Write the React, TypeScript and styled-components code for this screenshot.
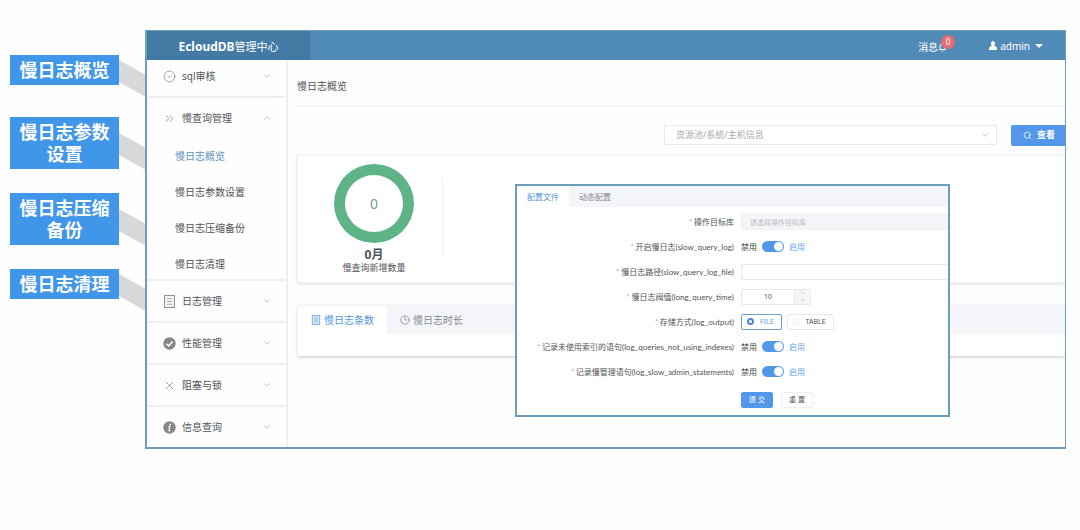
import React, { useState } from 'react';
import styled, { createGlobalStyle, css } from 'styled-components';
import {
  ChevronDown, ChevronUp, ChevronsRight, CircleCheck, Clock3, Search, X,
} from 'lucide-react';

const GlobalStyle = createGlobalStyle`
  * { box-sizing: border-box; }
  body {
    margin: 0;
    background: #fefefe;
    color: #505357;
    font-family: "Noto Sans", "Noto Sans CJK SC", sans-serif;
    font-size: 10px;
    line-height: 14px;
  }
  button, input, select { font: inherit; color: inherit; margin: 0; }
  h1, h2, p, ul { margin: 0; padding: 0; font-weight: 400; }
  ul { list-style: none; }
  a { color: inherit; text-decoration: none; }
  svg { display: block; flex: none; }
`;

const Page = styled.div`
  display: flex;
  align-items: flex-start;
  padding: 30px 14px 30px 10px;
`;

/* Callouts */
const Callouts = styled.aside`
  flex: none;
  width: 109px;
  margin-right: 26px;
  padding-top: 25px;
  display: flex;
  flex-direction: column;
  gap: 24px;
`;
const CalloutGroup = styled.div`
  display: flex;
  flex-direction: column;
  gap: 32px;
`;
const CalloutBox = styled.div`
  position: relative;
  padding: 4px 8px;
  background: #4096e8;
  color: #fff;
  font-size: 18px;
  line-height: 22px;
  font-weight: 700;
  text-align: center;
`;
const Connector = styled.svg`
  position: absolute;
  left: 100%;
  top: calc(50% - 10px);
`;

/* Application frame */
const App = styled.div`
  position: relative;
  flex: 1;
  min-width: 0;
  border: solid #6f9dbf;
  border-width: 1px 1px 2px 2px;
`;
const Header = styled.header`
  display: flex;
  align-items: center;
  height: 29px;
  background: #508bb7;
  color: #fff;
`;
const Brand = styled.h1`
  width: 163px;
  align-self: stretch;
  padding-top: 2px;
  background: #427aa4;
  font-size: 11px;
  line-height: 28px;
  text-align: center;
  b { font-size: 12px; }
`;
const Grow = styled.div`
  flex: 1;
`;
const HeaderButton = styled.button`
  position: relative;
  display: flex;
  align-items: center;
  gap: 3px;
  padding: 0;
  margin-right: 22px;
  border: 0;
  background: none;
  color: #fff;
  font-size: 10px;
`;
const Message = styled(HeaderButton)`
  gap: 0;
  margin-right: 42px;
  padding-top: 3px;
`;
const Badge = styled.span`
  position: absolute;
  right: -8px;
  top: -2px;
  width: 14px;
  height: 14px;
  border-radius: 7px;
  background: #e26d72;
  font-size: 8px;
  line-height: 14px;
  text-align: center;
`;
const Caret = styled.span`
  margin-left: 2px;
  border: solid transparent;
  border-width: 4px 4px 0;
  border-top-color: #fff;
`;
const Body = styled.div`
  display: flex;
  overflow: hidden;
`;

/* Side menu */
const Menu = styled.nav`
  flex: none;
  width: 141px;
  margin-top: -4px;
  border-right: 2px solid #eeeff0;
`;
const MenuRow = styled.button<{ $open?: boolean }>`
  display: flex;
  align-items: center;
  gap: 6px;
  width: 100%;
  height: ${p => (p.$open ? 40 : 42)}px;
  padding: 0 14px 0 16px;
  border: 0;
  border-bottom: ${p => (p.$open ? '0' : '2px solid #eeeff0')};
  background: none;
  text-align: left;
  > span { flex: 1; }
  &:last-child { height: 40px; border-bottom: 0; }
`;
const SubMenu = styled.ul`
  border-bottom: 2px solid #eeeff0;
  height: 143px;
`;
const SubLink = styled.a<{ $active?: boolean }>`
  display: block;
  padding-left: 28px;
  line-height: 36px;
  color: ${p => (p.$active ? '#5a92bf' : 'inherit')};
`;

/* Main column */
const Main = styled.main`
  flex: 1;
  min-width: 0;
  padding-left: 9px;
`;
const Title = styled.h2`
  padding-top: 6px;
  font-size: 10px;
  line-height: 40px;
  border-bottom: 1px solid #eeeff0;
`;
const Filters = styled.div`
  display: flex;
  justify-content: flex-end;
  align-items: center;
  gap: 14px;
  height: 48px;
  padding-top: 8px;
`;
const SelectWrap = styled.div`
  position: relative;
  width: 333px;
  > svg { position: absolute; right: 7px; top: 5px; pointer-events: none; }
`;
const Select = styled.select`
  appearance: none;
  width: 100%;
  height: 20px;
  padding: 0 11px;
  border: 1px solid #e6e8eb;
  border-radius: 2px;
  background: #fff;
  color: #a9abaf;
  font-size: 9px;
`;
const ViewButton = styled.button`
  display: flex;
  align-items: center;
  gap: 5px;
  width: 54px;
  height: 21px;
  padding: 0 0 0 12px;
  border: 0;
  border-radius: 2px 0 0 2px;
  background: #5397ea;
  color: #fff;
  font-size: 9px;
`;
const Card = styled.section`
  display: flex;
  background: #fff;
  border: 1px solid #f0f1f2;
  border-right: 0;
  box-shadow: 0 1px 3px rgba(0, 0, 0, 0.12);
`;
const StatCard = styled(Card)`
  height: 128px;
  padding: 8px 0;
`;
const Stat = styled.div`
  display: flex;
  flex-direction: column;
  align-items: center;
  width: 152px;
  color: #505357;
  font-size: 9px;
  line-height: 12px;
`;
const StatMonth = styled.strong`
  font-size: 12px;
  line-height: 14px;
  margin-top: 5px;
`;
const Ring = styled.div`
  display: grid;
  place-items: center;
  width: 80px;
  height: 80px;
  border: 11px solid #5fb487;
  border-radius: 50%;
  color: #74a08c;
  font-size: 14px;
`;
const Separator = styled.div`
  width: 1px;
  height: 78px;
  margin: 14px 0 0 -8px;
  background: #eeeff0;
`;
const TabCard = styled(Card)`
  flex-direction: column;
  height: 52px;
  margin-top: 22px;
  border-bottom: 1px solid #d9dbdd;
`;
const TabBar = styled.div`
  display: flex;
  background: #f4f5f8;
`;
const tabActive = css`
  background: #fff;
  color: #5397d8;
`;
const Tab = styled.button<{ $active?: boolean }>`
  display: flex;
  align-items: center;
  gap: 3px;
  height: 28px;
  padding: 0 13px;
  border: 0;
  background: none;
  color: #85888c;
  ${p => p.$active && tabActive}
`;

/* Floating configuration window */
const Dialog = styled.section`
  position: absolute;
  top: 153px;
  right: 115px;
  width: 435px;
  overflow: hidden;
  border: 2px solid #6b9dbd;
  background: #fff;
  font-size: 8px;
  line-height: 12px;
`;
const DialogTab = styled(Tab)`
  height: 21px;
  padding: 0 10px;
  font-size: 8px;
`;
const Form = styled.form`
  padding: 2px 0 7px;
`;
const Row = styled.div`
  display: grid;
  grid-template-columns: 217px 1fr;
  column-gap: 7px;
  align-items: center;
  height: 25px;
`;
const Label = styled.label`
  font-family: Lato, "Noto Sans CJK SC", sans-serif;
  text-align: right;
  white-space: nowrap;
  &::before { content: "* "; color: #c99a9a; font-size: 7px; }
`;
const Field = styled.div`
  display: flex;
  align-items: center;
  gap: 5px;
`;
const TextBox = styled.input`
  width: 100%;
  height: 16px;
  padding: 0 8px;
  border: 1px solid #e6e8eb;
  border-right: 0;
  border-radius: 2px 0 0 2px;
  background: #fff;
  &:disabled { background: #f4f5f8; border-color: #eff0f3; }
  &::placeholder { color: #b9bbc0; opacity: 1; font-size: 7px; }
`;
const Stepper = styled.div`
  display: flex;
  width: 70px;
  height: 16px;
  border: 1px solid #e6e8eb;
  border-radius: 2px;
`;
const NumberBox = styled.input`
  flex: 1;
  min-width: 0;
  padding: 0;
  border: 0;
  background: none;
  text-align: center;
  font-size: 7px;
`;
const StepButtons = styled.div`
  display: flex;
  flex-direction: column;
  width: 16px;
  border-left: 1px solid #e6e8eb;
  background: #f4f5f8;
`;
const StepButton = styled.button`
  display: grid;
  place-items: center;
  height: 7px;
  padding: 0;
  border: 0;
  background: none;
  color: #a9abaf;
`;
const Switch = styled.input`
  appearance: none;
  position: relative;
  width: 22px;
  height: 11px;
  border-radius: 6px;
  background: #c9ccd2;
  &::after {
    content: "";
    position: absolute;
    top: 1px;
    left: 1px;
    width: 9px;
    height: 9px;
    border-radius: 50%;
    background: #fff;
  }
  &:checked { background: #5397ea; }
  &:checked::after { left: 12px; }
`;
const SwitchText = styled.span<{ $on?: boolean }>`
  color: ${p => (p.$on ? '#5f9fe6' : '#3c3f43')};
`;
const RadioBox = styled.label<{ $on: boolean }>`
  display: flex;
  align-items: center;
  gap: 6px;
  height: 16px;
  padding: 0 7px 0 5px;
  border: 1px solid ${p => (p.$on ? '#6b9fd0' : '#e6e8eb')};
  border-radius: 2px;
  color: ${p => (p.$on ? '#5f9fe6' : 'inherit')};
  font-size: 7px;
`;
const Radio = styled.input`
  appearance: none;
  width: 7px;
  height: 7px;
  border: 1px solid #eceef0;
  border-radius: 50%;
  &:checked { border: 2px solid #4a86cc; }
`;
const Actions = styled.div`
  display: flex;
  gap: 8px;
  margin: 8px 0 0 224px;
`;
const FormButton = styled.button<{ $primary?: boolean }>`
  width: 32px;
  height: 16px;
  padding: 0;
  border: 1px solid ${p => (p.$primary ? '#5397ea' : '#eceef0')};
  border-radius: 2px;
  background: ${p => (p.$primary ? '#5397ea' : '#fff')};
  color: ${p => (p.$primary ? '#fff' : 'inherit')};
  font-size: 7px;
  line-height: 12px;
`;

const ListIcon = ({ color = '#8d9094', fill = 'none', size = 12 }) => (
  <svg width={size} height={size} viewBox="0 0 12 12" fill="none" stroke={color}>
    <rect x="1.5" y="0.5" width="9" height="11" fill={fill} />
    <path d="M3.5 3.5h5M3.5 6h5M3.5 8.5h5" strokeWidth="0.8" />
  </svg>
);
const CheckDisc = () => (
  <svg width="13" height="13" viewBox="0 0 13 13">
    <circle cx="6.5" cy="6.5" r="6.2" fill="#85888b" />
    <path d="M3.5 6.8l2.2 2.1 4-4.4" fill="none" stroke="#fff" strokeWidth="1.5" />
  </svg>
);
const InfoDisc = () => (
  <svg width="13" height="13" viewBox="0 0 13 13">
    <circle cx="6.5" cy="6.5" r="6.2" fill="#85888b" />
    <circle cx="7.2" cy="3.5" r="0.9" fill="#fff" />
    <path d="M5.3 5.7h1.5l-.8 3.9h1.2" fill="none" stroke="#fff" strokeWidth="1.2" />
  </svg>
);
const UserIcon = () => (
  <svg width="8" height="9" viewBox="0 0 8 9" fill="#fff">
    <ellipse cx="4" cy="2.6" rx="2.1" ry="2.6" />
    <path d="M0 9V7.4C0 6 1.3 5.4 2.4 5h3.2C6.7 5.4 8 6 8 7.4V9z" />
  </svg>
);
const BellIcon = () => (
  <svg width="9" height="10" viewBox="0 0 9 10" fill="none" stroke="#fff">
    <path d="M1 7.5h7M2 7.5V4.500a2.500 2.500 0 0 1 5 0v3M3.800 9.200h1.400" />
  </svg>
);

function Callout({ lines }: { lines: string[] }) {
  return (
    <CalloutBox>
      {lines.map(line => <div key={line}>{line}</div>)}
      <Connector width="27" height="37" viewBox="0 0 27 37">
        <path d="M0 0L27 15V37L0 22Z" fill="#d6d8da" />
      </Connector>
    </CalloutBox>
  );
}

function MenuItem({ icon, text, open }: { icon: React.ReactNode; text: string; open?: boolean }) {
  const Chevron = open ? ChevronUp : ChevronDown;
  return (
    <MenuRow type="button" $open={open}>
      {icon}
      <span>{text}</span>
      <Chevron size={10} color="#b0b2b5" strokeWidth={2} />
    </MenuRow>
  );
}

function SwitchRow({ id, label }: { id: string; label: string }) {
  return (
    <Row>
      <Label htmlFor={id}>{label}</Label>
      <Field>
        <SwitchText>禁用</SwitchText>
        <Switch id={id} type="checkbox" defaultChecked />
        <SwitchText $on>启用</SwitchText>
      </Field>
    </Row>
  );
}

export default function SlowLogPage() {
  const [output, setOutput] = useState('FILE');
  const [seconds, setSeconds] = useState(10);
  return (
    <>
      <GlobalStyle />
      <Page>
        <Callouts>
          <CalloutGroup>
            <Callout lines={['慢日志概览']} />
            <Callout lines={['慢日志参数', '设置']} />
          </CalloutGroup>
          <Callout lines={['慢日志压缩', '备份']} />
          <Callout lines={['慢日志清理']} />
        </Callouts>
        <App>
          <Header>
            <Brand><b>EcloudDB</b>管理中心</Brand>
            <Grow />
            <Message type="button">消息<BellIcon /><Badge>0</Badge></Message>
            <HeaderButton type="button"><UserIcon />admin<Caret /></HeaderButton>
          </Header>
          <Body>
            <Menu>
              <MenuItem icon={<CircleCheck size={13} color="#85888b" strokeWidth={1.5} />} text="sql审核" />
              <MenuItem icon={<ChevronsRight size={13} color="#85888b" strokeWidth={1.5} />} text="慢查询管理" open />
              <SubMenu>
                <li><SubLink href="#overview" $active>慢日志概览</SubLink></li>
                <li><SubLink href="#params">慢日志参数设置</SubLink></li>
                <li><SubLink href="#backup">慢日志压缩备份</SubLink></li>
                <li><SubLink href="#clean">慢日志清理</SubLink></li>
              </SubMenu>
              <MenuItem icon={<ListIcon size={13} />} text="日志管理" />
              <MenuItem icon={<CheckDisc />} text="性能管理" />
              <MenuItem icon={<X size={13} color="#85888b" strokeWidth={1.5} />} text="阻塞与锁" />
              <MenuItem icon={<InfoDisc />} text="信息查询" />
            </Menu>
            <Main>
              <Title>慢日志概览</Title>
              <Filters>
                <SelectWrap>
                  <Select aria-label="资源池" defaultValue="">
                    <option value="">资源池/系统/主机信息</option>
                  </Select>
                  <ChevronDown size={10} color="#b0b2b5" />
                </SelectWrap>
                <ViewButton type="button"><Search size={9} /><b>查看</b></ViewButton>
              </Filters>
              <StatCard>
                <Stat>
                  <Ring>0</Ring>
                  <StatMonth>0月</StatMonth>
                  <p>慢查询新增数量</p>
                </Stat>
                <Separator />
              </StatCard>
              <TabCard>
                <TabBar>
                  <Tab type="button" $active><ListIcon size={10} color="#6fa5dc" fill="#dbe8f6" />慢日志条数</Tab>
                  <Tab type="button"><Clock3 size={10} />慢日志时长</Tab>
                </TabBar>
              </TabCard>
            </Main>
          </Body>
          <Dialog>
            <TabBar>
              <DialogTab type="button" $active>配置文件</DialogTab>
              <DialogTab type="button">动态配置</DialogTab>
            </TabBar>
            <Form onSubmit={e => e.preventDefault()}>
              <Row>
                <Label htmlFor="target">操作目标库</Label>
                <TextBox id="target" disabled placeholder="请选择操作目标库" />
              </Row>
              <SwitchRow id="slow" label="开启慢日志(slow_query_log)" />
              <Row>
                <Label htmlFor="file">慢日志路径(slow_query_log_file)</Label>
                <TextBox id="file" />
              </Row>
              <Row>
                <Label htmlFor="time">慢日志阀值(long_query_time)</Label>
                <Stepper>
                  <NumberBox id="time" inputMode="numeric" value={seconds} onChange={e => setSeconds(Number(e.target.value) || 0)} />
                  <StepButtons>
                    <StepButton type="button" aria-label="增加" onClick={() => setSeconds(seconds + 1)}><ChevronUp size={6} /></StepButton>
                    <StepButton type="button" aria-label="减少" onClick={() => setSeconds(seconds - 1)}><ChevronDown size={6} /></StepButton>
                  </StepButtons>
                </Stepper>
              </Row>
              <Row>
                <Label as="span">存储方式(log_output)</Label>
                <Field>
                  {['FILE', 'TABLE'].map(v => (
                    <RadioBox key={v} $on={output === v}>
                      <Radio type="radio" name="output" checked={output === v} onChange={() => setOutput(v)} />
                      {v}
                    </RadioBox>
                  ))}
                </Field>
              </Row>
              <SwitchRow id="index" label="记录未使用索引的语句(log_queries_not_using_indexes)" />
              <SwitchRow id="admin" label="记录慢管理语句(log_slow_admin_statements)" />
              <Actions>
                <FormButton type="submit" $primary>提 交</FormButton>
                <FormButton type="reset">重 置</FormButton>
              </Actions>
            </Form>
          </Dialog>
        </App>
      </Page>
    </>
  );
}
